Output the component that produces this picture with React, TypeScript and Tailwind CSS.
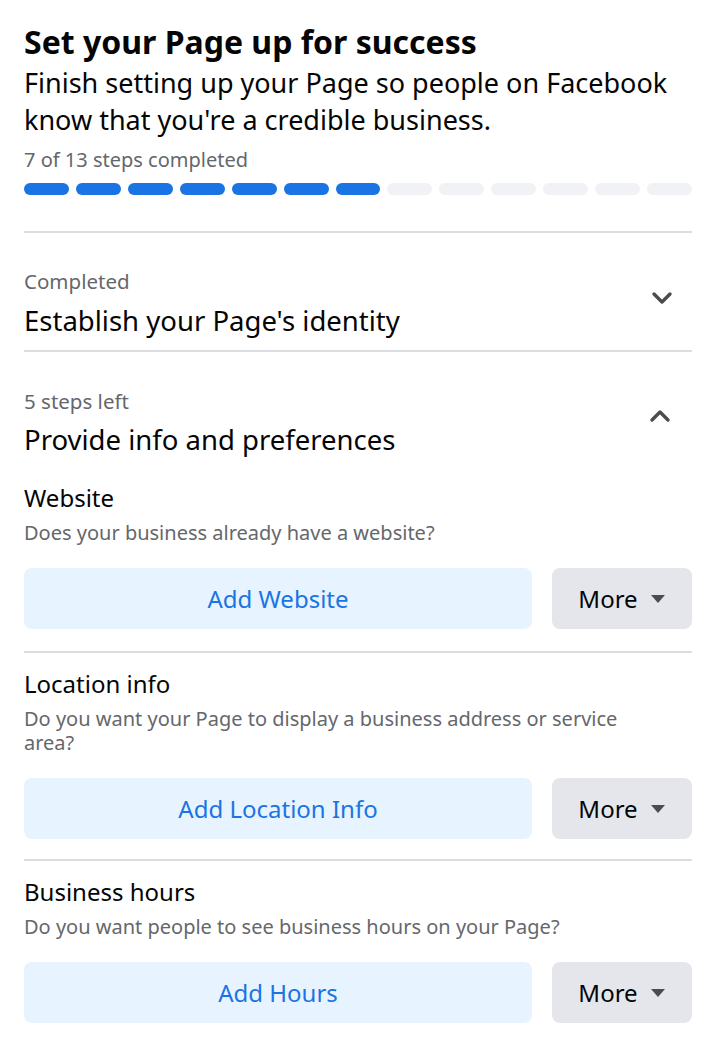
const font = { fontFamily: '"Noto Sans", "Open Sans", sans-serif' }

function Chevron({ up }: { up?: boolean }) {
  return (
    <svg width="22" height="14" viewBox="0 0 22 14" className="text-[#4b4c4f]">
      <path
        d={up ? 'M3 11 L11 3 L19 11' : 'M3 3 L11 11 L19 3'}
        fill="none"
        stroke="currentColor"
        strokeWidth="3.4"
        strokeLinecap="round"
        strokeLinejoin="round"
      />
    </svg>
  )
}

function Divider({ className = '' }: { className?: string }) {
  return <div className={`h-[2px] bg-[#dadde1] ${className}`} />
}

function ActionRow({ label, className = '' }: { label: string; className?: string }) {
  return (
    <div className={`flex gap-5 ${className}`}>
      <button className="flex-1 h-[61px] rounded-lg bg-[#e7f3ff] text-[#1b74e4] text-[24px]">
        {label}
      </button>
      <button className="w-[140px] h-[61px] rounded-lg bg-[#e4e6eb] text-[#050505] text-[24px] flex items-center justify-center gap-3">
        More
        <svg width="16" height="10" viewBox="0 0 16 10">
          <path d="M1 1 L15 1 L8 9 Z" fill="#4b4c4f" />
        </svg>
      </button>
    </div>
  )
}

function Step({
  title,
  desc,
  action,
  first,
}: {
  title: string
  desc: string
  action: string
  first?: boolean
}) {
  return (
    <div>
      <p className={`text-[24px] leading-[30px] text-[#050505] ${first ? 'mt-[26px]' : 'mt-[16px]'}`}>{title}</p>
      <p className="mt-[8px] max-w-[640px] text-[20px] leading-[24px] text-[#65676b]">{desc}</p>
      <ActionRow label={action} className="mt-[23px]" />
    </div>
  )
}

export default function App() {
  const done = 7
  const total = 13

  return (
    <div className="min-h-screen bg-white pl-6 pr-7 pt-6" style={font}>
      <h1 className="text-[32px] leading-[36px] font-bold text-[#050505]">Set your Page up for success</h1>
      <p className="mt-[4px] text-[27px] leading-[37px] text-[#050505]">
        Finish setting up your Page so people on Facebook know that you're a credible business.
      </p>
      <p className="mt-[10px] text-[20px] leading-[24px] text-[#65676b]">
        {done} of {total} steps completed
      </p>
      <div className="mt-[11px] flex gap-[7px]">
        {Array.from({ length: total }).map((_, i) => (
          <div key={i} className={`flex-1 h-[12px] rounded-full ${i < done ? 'bg-[#1b74e4]' : 'bg-[#f0f2f5]'}`} />
        ))}
      </div>

      <Divider className="mt-[36px]" />

      <div className="flex items-center justify-between">
        <div>
          <p className="mt-[36px] text-[20.5px] leading-[24px] text-[#65676b]">Completed</p>
          <p className="mt-[11px] text-[27.5px] leading-[34px] text-[#050505]">Establish your Page's identity</p>
        </div>
        <div className="mr-[19px] mt-[24px]">
          <Chevron />
        </div>
      </div>

      <Divider className="mt-[12px]" />

      <div className="flex items-center justify-between">
        <div>
          <p className="mt-[37px] text-[20.5px] leading-[24px] text-[#65676b]">5 steps left</p>
          <p className="mt-[10px] text-[27.5px] leading-[34px] text-[#050505]">Provide info and preferences</p>
        </div>
        <div className="mr-[21px] mt-[22px]">
          <Chevron up />
        </div>
      </div>

      <Step first title="Website" desc="Does your business already have a website?" action="Add Website" />
      <Divider className="mt-[22px]" />
      <Step
        title="Location info"
        desc="Do you want your Page to display a business address or service area?"
        action="Add Location Info"
      />
      <Divider className="mt-[20px]" />
      <Step title="Business hours" desc="Do you want people to see business hours on your Page?" action="Add Hours" />
    </div>
  )
}
